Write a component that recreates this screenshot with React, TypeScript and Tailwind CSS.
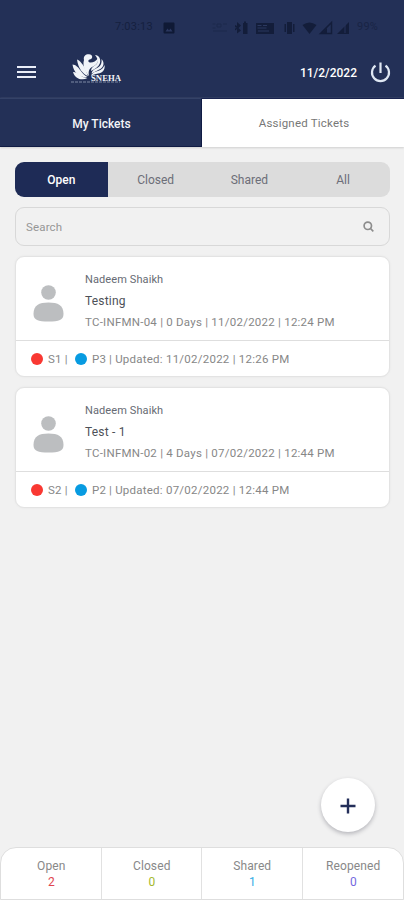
import React from "react";

type Ticket = {
  owner: string;
  title: string;
  details: string;
  severity: string;
  priority: string;
  updated: string;
};

const tickets: Ticket[] = [
  {
    owner: "Nadeem Shaikh",
    title: "Testing",
    details: "TC-INFMN-04 | 0 Days | 11/02/2022 | 12:24 PM",
    severity: "S1 |",
    priority: "P3",
    updated: "| Updated: 11/02/2022 | 12:26 PM",
  },
  {
    owner: "Nadeem Shaikh",
    title: "Test - 1",
    details: "TC-INFMN-02 | 4 Days | 07/02/2022 | 12:44 PM",
    severity: "S2 |",
    priority: "P2",
    updated: "| Updated: 07/02/2022 | 12:44 PM",
  },
];

const totals = [
  { label: "Open", value: 2, color: "text-[#e0444f]" },
  { label: "Closed", value: 0, color: "text-[#a3b82c]" },
  { label: "Shared", value: 1, color: "text-[#35ace6]" },
  { label: "Reopened", value: 0, color: "text-[#7468e0]" },
];

function StatusBar() {
  return (
    <div className="flex h-[54px] items-center pt-px pl-[115px] text-[11px] text-[#15203f]">
      <span className="w-[40px] tracking-[0.25px]">7:03:13</span>
      <svg className="ml-[8px]" width="12" height="12" viewBox="0 0 12 12" fill="#0f1935">
        <path d="M1.5 0.5h9a1 1 0 0 1 1 1v9a1 1 0 0 1-1 1h-9a1 1 0 0 1-1-1v-9a1 1 0 0 1 1-1z" />
        <path d="M2.5 9.5l2-3 1.5 2 1.5-2 2 3z" fill="#2b3860" />
      </svg>
      <svg className="ml-[37px]" width="176" height="16" viewBox="0 0 176 16" fill="#131d3a">
        <g fill="none" stroke="#1d294d" strokeWidth="1">
          <path d="M0.5 4h3M0.5 8h3M5 4h4v3H5zM11 4h4M1 11h14" />
        </g>
        <path d="M25 2l4 3.5-2.5 2.5 2.5 2.5-4 3V9l-2 1.5V8.500L25 8l-2-1V5l2 1z" />
        <path d="M31 3h1V1.500h2V3h1.500v11H31z" />
        <path d="M44 3h18v11H44z" />
        <path d="M45.500 5.500h4M45.500 8h9M51 5.500h4M46 11h11" stroke="#2b385f" fill="none" />
        <path d="M75 2h5v12h-5zM72.500 4h1.500v8h-1.500zM81 4h1.500v8H81z" />
        <path d="M90.500 5q7-5 14 0l-7 9z" />
        <path d="M108.500 13.500L119.500 2.500v11z" fill="none" stroke="#131d3a" strokeWidth="1.500" />
        <path d="M109 13.500L115 8v5.500z" />
        <path d="M125 14L137 2v12z" />
        <path d="M133 5v8" stroke="#26325a" />
      </svg>
      <span className="-ml-[31px] tracking-[0.2px] text-[#192445]">99%</span>
    </div>
  );
}

function Logo() {
  return (
    <svg className="mb-[6px] ml-[35px]" width="53" height="34" viewBox="0 0 53 34" fill="#f1f4f8">
      <path d="M13 8C12 4 15 2 18 2.200c4 0 4 4.300 1.500 5C17 7.500 16.500 10 19 10.500c3 0.300 6-1.500 8-4 0.500 5-2.500 7-6 8.500-3 1.500-4 5-3 9C15 21 11 14 13 8z" />
      <path d="M6 7.500c3 1 6 5 8 9 1 2.500 2 5 3 7.500-5-1.500-10-8-11-16.500z" />
      <path d="M1.500 12.500c3 0 6 3 8 6 2 3 4 5 7 6.500-7 1-14-4-15-12.500z" />
      <path d="M2 20c3 0 5 1.500 7.500 3.500 2 1.500 4 2 7 2.500C11 29 4 27 2 20z" />
      <path d="M24 3c4 0 6 4 5 8-1.500 4-5 6-9 8 0-3 2-4.500 4.500-6 3-2 3-6-0.500-10z" />
      <path d="M30.500 7c3 3 2.500 7-0.500 9.500-3 2-6 3-9.500 5 1-4 4-4.500 6.500-6 3-2 4-4.500 3.500-8.500z" />
      <path d="M33.500 13c1 5-2.500 8-6.500 8.500-3 0.500-5 1-7 2.500 1-3.500 4-4 7-5 3.500-1 5.500-3 6.500-6z" />
      <text x="20" y="28.500" textLength="30" lengthAdjust="spacingAndGlyphs" fontFamily="Liberation Serif, serif" fontSize="9" fontWeight="bold">SNEHA</text>
      <path d="M0 30h49" stroke="#7e89a6" strokeWidth="1" strokeDasharray="3 1" />
    </svg>
  );
}

function Header() {
  return (
    <header className="h-[98px] bg-[#233057]">
      <StatusBar />
      <div className="flex h-[36px] items-center pl-[17px]">
        <div className="flex w-[19px] flex-col gap-[2.500px]">
          <span className="h-[2.500px] bg-[#e9edf8]" />
          <span className="h-[2.500px] bg-[#e9edf8]" />
          <span className="h-[2.500px] bg-[#e9edf8]" />
        </div>
        <Logo />
        <span className="ml-auto mr-[13px] pt-px text-[12px] font-medium text-white">11/2/2022</span>
        <svg className="mr-[13px]" width="21" height="21" viewBox="0 0 21 21" fill="none" stroke="#dfe7f3" strokeWidth="2.200">
          <path d="M10.500 0.500v10.500M5.500 3.700a8.500 8.500 0 1 0 10 0" />
        </svg>
      </div>
    </header>
  );
}

function TicketCard({ ticket }: { ticket: Ticket }) {
  return (
    <article className="h-[121px] rounded-[9px] border border-[#e3e3e3] bg-white shadow-[0_0_2px_#e4e4e4]">
      <div className="flex h-[84px] border-b border-[#dedede] pl-[17px]">
        <svg className="mt-[28px]" width="31" height="38" viewBox="0 0 31 38" fill="#bcbec0">
          <circle cx="15.500" cy="7.500" r="7.300" />
          <path d="M0.500 29C0.500 20 6 17.500 15.500 17.500S30.500 20 30.500 29C30.500 35 26 36.500 15.500 36.500S0.500 35 0.500 29z" />
        </svg>
        <div className="ml-[21px] pt-[15px] whitespace-nowrap">
          <p className="h-[20px] text-[11px] leading-[16px] tracking-[0.1px] text-[#666a73]">{ticket.owner}</p>
          <p className="h-[22px] text-[12px] leading-[19px] tracking-[0.2px] text-[#4d5158]">{ticket.title}</p>
          <p className="text-[11.5px] leading-[17px] tracking-[0.24px] text-[#878787]">{ticket.details}</p>
        </div>
      </div>
      <div className="flex h-[35px] items-center pl-[15px] text-[11.5px] tracking-[0.24px] whitespace-nowrap text-[#878787]">
        <span className="h-[12px] w-[12px] rounded-full bg-[#f93832]" />
        <span className="ml-[5px] w-[27px] pt-[2px]">{ticket.severity}</span>
        <span className="h-[12px] w-[12px] rounded-full bg-[#079be1]" />
        <span className="ml-[5px] w-[17px] pt-[2px]">{ticket.priority}</span>
        <span className="pt-[2px]">{ticket.updated}</span>
      </div>
    </article>
  );
}

export default function App() {
  return (
    <div className="flex h-[900px] w-[404px] flex-col overflow-hidden bg-[#f1f1f1] font-['Roboto',sans-serif]">
      <Header />
      <nav className="grid h-[49px] shrink-0 grid-cols-2 text-[12px] shadow-[0_1px_2px_#cfcfcf]">
        <button className="border-t border-r border-b border-t-[#344268] border-r-[#101b43] border-b-[#101b43] bg-[#233057] pt-[3px] pl-[2px] font-medium text-[#f4f5f8]">My Tickets</button>
        <button className="border-t border-[#1a2450] bg-white pt-[2px] pl-[2px] text-[11.500px] tracking-[0.2px] text-[#777]">Assigned Tickets</button>
      </nav>
      <main className="flex flex-1 flex-col pt-[15px] pr-[14px] pl-[15px]">
        <div className="grid h-[35px] grid-cols-4 overflow-hidden rounded-[9px] bg-[#dcdcdc] text-[12px] text-[#6c6e78]">
          <button className="mr-px bg-[#1e2b56] font-medium text-white">Open</button>
          <button>Closed</button>
          <button>Shared</button>
          <button>All</button>
        </div>
        <div className="mt-[10px] flex h-[39px] items-center rounded-[9px] border border-[#d8d8d8] px-[10px] text-[11.500px] tracking-[0.150px] text-[#969696]">
          <span className="flex-1 pt-[3px]">Search</span>
          <svg className="mr-[5px]" width="11" height="11" viewBox="0 0 11 11" fill="none" stroke="#8d8d8d" strokeWidth="1.700">
            <circle cx="4.800" cy="4.800" r="3.700" />
            <path d="M7 7l3.300 3.300" />
          </svg>
        </div>
        <div className="mt-[10px] flex flex-col gap-[10px]">
          {tickets.map((t) => <TicketCard key={t.title} ticket={t} />)}
        </div>
        <button aria-label="Add ticket" className="mt-auto mr-[15px] mb-[15px] flex h-[54px] w-[54px] items-center justify-center self-end rounded-full bg-white pt-[2px] shadow-[0_2px_4px_#b6b6bb]">
          <svg width="16" height="16" viewBox="0 0 16 16" stroke="#232e59" strokeWidth="2.400">
            <path d="M8 0.500v15M0.500 8h15" />
          </svg>
        </button>
      </main>
      <footer className="grid h-[53px] shrink-0 grid-cols-4 divide-x divide-[#e1e1e1] overflow-hidden rounded-t-[16px] border border-[#dedede] bg-white text-center text-[12px] text-[#888]">
        {totals.map((item) => (
          <div key={item.label} className="pt-[10px] pl-px">
            <p className="leading-[17px] tracking-[0.1px]">{item.label}</p>
            <p className={`leading-[15px] ${item.color}`}>{item.value}</p>
          </div>
        ))}
      </footer>
    </div>
  );
}
